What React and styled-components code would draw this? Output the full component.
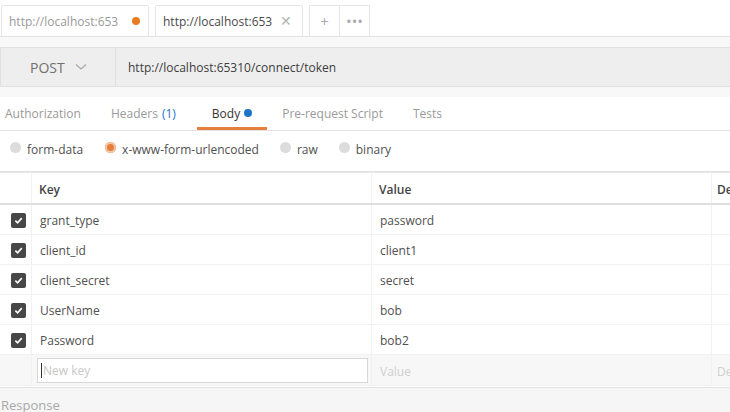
import React from 'react';
import styled, { createGlobalStyle } from 'styled-components';

const GlobalStyle = createGlobalStyle`
  html, body {
    margin: 0;
    padding: 0;
    background: #ffffff;
    font-family: "Open Sans", "Liberation Sans", sans-serif;
    font-size: 12px;
    color: #505050;
    overflow: hidden;
  }
`;

const Page = styled.div`
  width: 730px;
  height: 412px;
  overflow: hidden;
  display: flex;
  flex-direction: column;
`;

const TabBar = styled.div`
  height: 37px;
  flex-shrink: 0;
  box-sizing: border-box;
  display: flex;
  align-items: flex-end;
  gap: 6px;
  padding-left: 1px;
  border-bottom: 1px solid #e2e2e2;
  background: #fff;
`;

const Tab = styled.div`
  width: 148px;
  height: 31px;
  box-sizing: border-box;
  border: 1px solid #e6e6e6;
  border-bottom: none;
  border-radius: 2px 2px 0 0;
  display: flex;
  align-items: center;
  padding: 0 8px 0 7px;
  color: ${(p) => (p.active ? '#4a4a4a' : '#9a9a9a')};
  font-size: 12px;
`;

const TabTitle = styled.span`
  flex: 1;
  overflow: hidden;
  white-space: nowrap;
`;

const Dot = styled.span`
  width: 8px;
  height: 8px;
  border-radius: 50%;
  background: ${(p) => p.color};
  display: inline-block;
`;

const Close = styled.span`
  color: #b5b5b5;
  font-size: 14px;
  line-height: 1;
  margin-right: 2px;
`;

const BtnGroup = styled.div`
  display: flex;
  height: 31px;
  box-sizing: border-box;
  border: 1px solid #e6e6e6;
  border-bottom: none;
`;

const GroupBtn = styled.div`
  width: 29px;
  display: flex;
  align-items: center;
  justify-content: center;
  color: #aaa;
  font-size: 15px;
  & + & {
    border-left: 1px solid #e6e6e6;
  }
`;

const Spacer = styled.div`
  height: ${(p) => p.h}px;
  flex-shrink: 0;
  background: #f8f8f8;
`;

const UrlBar = styled.div`
  height: 40px;
  flex-shrink: 0;
  box-sizing: border-box;
  display: flex;
  background: #eeeeee;
  border-top: 1px solid #e0e0e0;
  border-bottom: 1px solid #e0e0e0;
  border-left: 1px solid #e0e0e0;
`;

const Method = styled.div`
  width: 115px;
  box-sizing: border-box;
  border-right: 1px solid #e0e0e0;
  display: flex;
  align-items: center;
  padding-left: 29px;
  gap: 10px;
  color: #707070;
  font-size: 14px;
`;

const UrlText = styled.div`
  display: flex;
  align-items: center;
  padding-left: 12px;
  color: #3c3c3c;
  font-size: 12px;
`;

const ReqTabs = styled.div`
  height: 34px;
  flex-shrink: 0;
  box-sizing: border-box;
  display: flex;
  align-items: stretch;
  border-bottom: 1px solid #e2e2e2;
  background: #fff;
  padding-left: 5px;
`;

const ReqTab = styled.div`
  display: flex;
  align-items: center;
  gap: 4px;
  margin-right: ${(p) => p.mr}px;
  padding: 0 ${(p) => (p.active ? 15 : 0)}px;
  margin-left: ${(p) => (p.active ? -15 : 0)}px;
  color: ${(p) => (p.active ? '#333' : '#9a9a9a')};
  font-size: 12px;
  border-bottom: 3px solid ${(p) => (p.active ? '#e67e3c' : 'transparent')};
  padding-top: 2px;
`;

const Count = styled.span`
  color: #1e74c8;
`;

const RadioRow = styled.div`
  height: 41px;
  flex-shrink: 0;
  box-sizing: border-box;
  display: flex;
  align-items: center;
  padding: 0 0 3px 10px;
  border-bottom: 1px solid #e2e2e2;
`;

const RadioItem = styled.label`
  display: flex;
  align-items: center;
  gap: 6px;
  margin-right: ${(p) => p.mr}px;
  color: #505050;
  font-size: 12px;
`;

const RadioCircle = styled.span`
  width: 11px;
  height: 11px;
  border-radius: 50%;
  background: ${(p) => (p.on ? '#e67e3c' : '#dcdcdc')};
  box-shadow: inset 0 0 0 ${(p) => (p.on ? 2 : 0)}px #f3c6a6;
  margin-top: -4px;
`;

const Table = styled.div`
  flex-shrink: 0;
  border-top: 1px solid #e8e8e8;
`;

const Row = styled.div`
  display: grid;
  grid-template-columns: 31px 340px 340px 1fr;
  height: ${(p) => p.h || 30}px;
  box-sizing: border-box;
  border-bottom: ${(p) => (p.header ? '2px solid #dedede' : '1px solid #f2f2f2')};
  background: ${(p) => p.bg || '#fff'};
`;

const Cell = styled.div`
  display: flex;
  align-items: center;
  padding-left: ${(p) => p.pl ?? 8}px;
  padding-top: ${(p) => p.pt ?? 2}px;
  border-left: ${(p) => (p.first ? 'none' : '1px solid #f1f1f1')};
  color: ${(p) => p.color || '#505050'};
  font-size: 12px;
  font-weight: ${(p) => (p.bold ? 600 : 400)};
  overflow: hidden;
  white-space: nowrap;
`;

const Check = styled.span`
  width: 15px;
  height: 15px;
  border-radius: 2px;
  background: #474747;
  display: flex;
  align-items: center;
  justify-content: center;
  margin-left: 11px;
`;

const NewKeyInput = styled.div`
  width: 331px;
  height: 25px;
  box-sizing: border-box;
  border: 1px solid #d8d8d8;
  background: #fff;
  display: flex;
  align-items: center;
  padding-left: 3px;
  margin-left: -3px;
  color: #c8c8c8;
`;

const Caret = styled.span`
  width: 1px;
  height: 15px;
  background: #333;
  margin-right: 1px;
`;

const Response = styled.div`
  flex: 1;
  background: #f6f6f6;
  border-top: 1px solid #e4e4e4;
  padding: 8px 0 0 1px;
  color: #a8a8a8;
  font-size: 13px;
  margin-top: 1px;
`;

const rows = [
  ['grant_type', 'password'],
  ['client_id', 'client1'],
  ['client_secret', 'secret'],
  ['UserName', 'bob'],
  ['Password', 'bob2'],
];

const CheckMark = () => (
  <svg width="9" height="9" viewBox="0 0 10 10">
    <path d="M1.5 5.2 L4 7.6 L8.6 2.4" stroke="#fff" strokeWidth="1.8" fill="none" />
  </svg>
);

export default function App() {
  return (
    <Page>
      <GlobalStyle />
      <TabBar>
        <Tab>
          <TabTitle>http://localhost:653</TabTitle>
          <Dot color="#e67e22" />
        </Tab>
        <Tab active>
          <TabTitle>http://localhost:653</TabTitle>
          <Close>✕</Close>
        </Tab>
        <BtnGroup>
          <GroupBtn>+</GroupBtn>
          <GroupBtn>•••</GroupBtn>
        </BtnGroup>
      </TabBar>
      <Spacer h={10} />
      <UrlBar>
        <Method>
          POST
          <svg width="12" height="8" viewBox="0 0 12 8">
            <path d="M1 1.5 L6 6 L11 1.5" stroke="#a8a8a8" strokeWidth="1.3" fill="none" />
          </svg>
        </Method>
        <UrlText>http://localhost:65310/connect/token</UrlText>
      </UrlBar>
      <Spacer h={10} />
      <ReqTabs>
        <ReqTab mr={30}>Authorization</ReqTab>
        <ReqTab mr={36}>
          Headers <Count>(1)</Count>
        </ReqTab>
        <ReqTab active mr={15}>
          Body <Dot color="#1e74c8" />
        </ReqTab>
        <ReqTab mr={30}>Pre-request Script</ReqTab>
        <ReqTab mr={0}>Tests</ReqTab>
      </ReqTabs>
      <RadioRow>
        <RadioItem mr={22}>
          <RadioCircle />
          form-data
        </RadioItem>
        <RadioItem mr={21}>
          <RadioCircle on />
          x-www-form-urlencoded
        </RadioItem>
        <RadioItem mr={21}>
          <RadioCircle />
          raw
        </RadioItem>
        <RadioItem mr={0}>
          <RadioCircle />
          binary
        </RadioItem>
      </RadioRow>
      <Table>
        <Row header h={32}>
          <Cell first />
          <Cell bold color="#444" pl={7}>Key</Cell>
          <Cell bold color="#444" pl={7}>Value</Cell>
          <Cell bold color="#444" pl={5}>Description</Cell>
        </Row>
        {rows.map(([k, v]) => (
          <Row key={k}>
            <Cell first pl={0}>
              <Check>
                <CheckMark />
              </Check>
            </Cell>
            <Cell>{k}</Cell>
            <Cell>{v}</Cell>
            <Cell />
          </Row>
        ))}
        <Row bg="#f7f7f7" h={31}>
          <Cell first />
          <Cell pl={8} pt={0}>
            <NewKeyInput>
              <Caret />
              New key
            </NewKeyInput>
          </Cell>
          <Cell color="#cfcfcf" pl={8}>Value</Cell>
          <Cell color="#cfcfcf" pl={5}>Description</Cell>
        </Row>
      </Table>
      <Response>Response</Response>
    </Page>
  );
}
